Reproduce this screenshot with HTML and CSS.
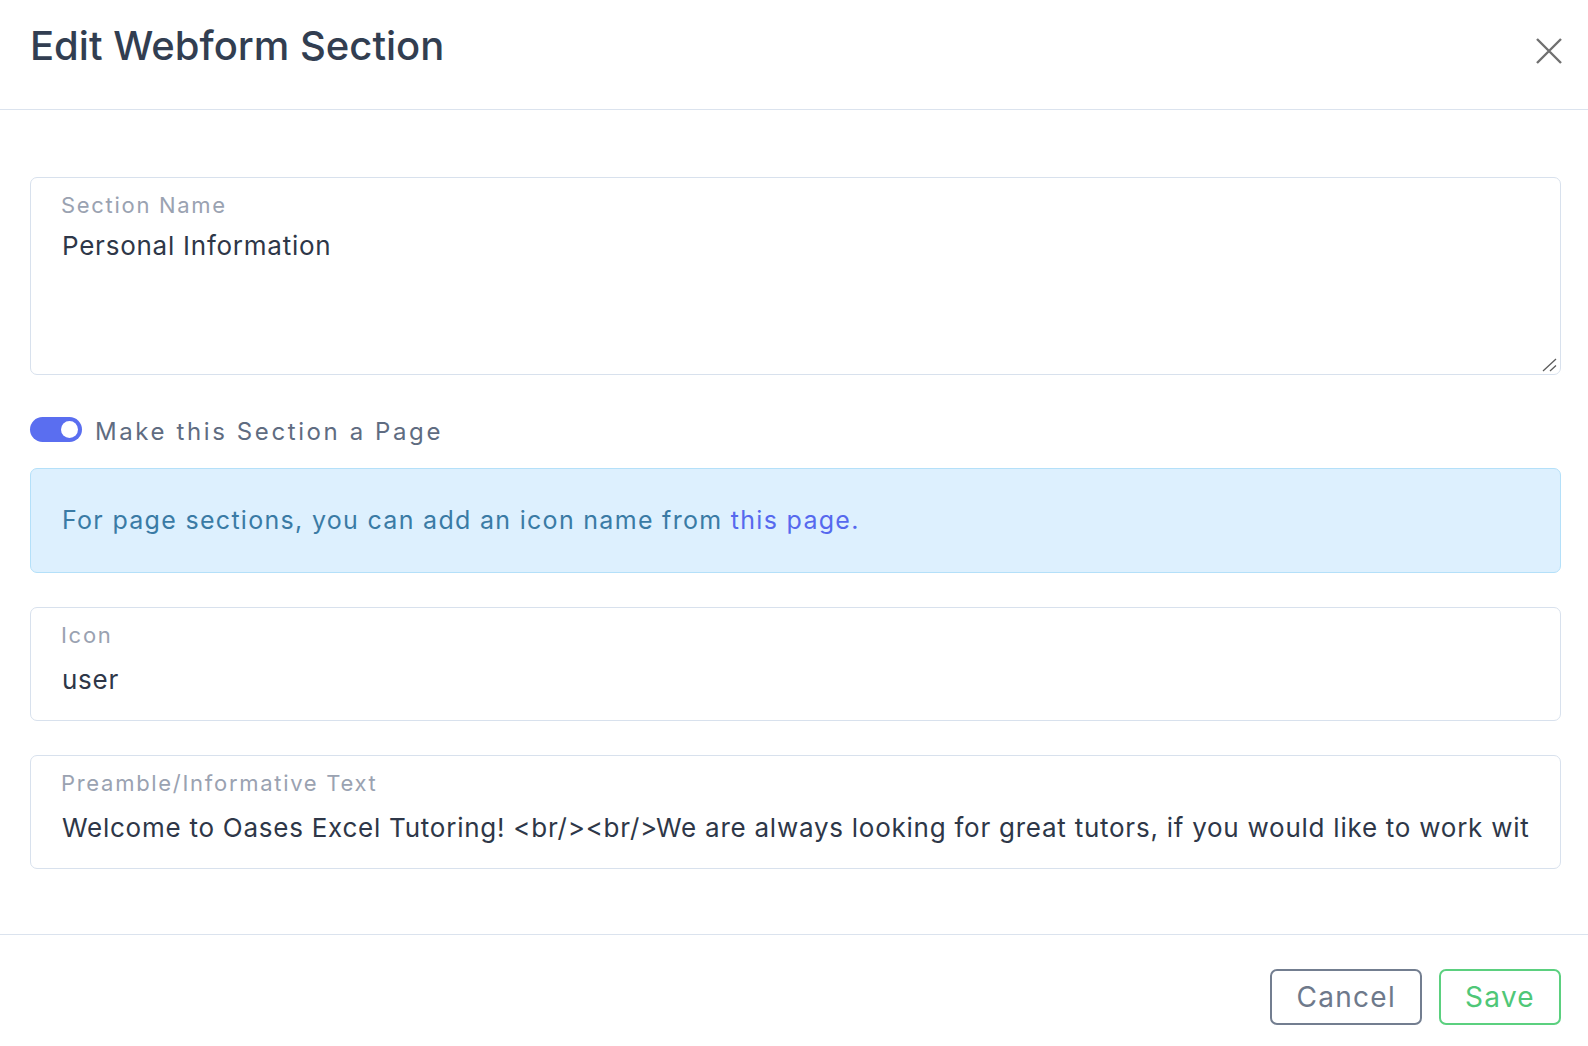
FILE: index.html
```html
<!DOCTYPE html>
<html>
<head>
  <title>Edit Webform Section</title>
  <link rel="stylesheet" href="styles.css">
</head>
<body>
  <div class="modal">
    <div class="modal-header">
      <h2 class="modal-title">Edit Webform Section</h2>
      <button type="button" class="btn-close" aria-label="Close">
        <svg width="26" height="26" viewBox="0 0 26 26">
          <path d="M1 1L25 25M25 1L1 25" stroke="#707070" stroke-width="2.4" fill="none"/>
        </svg>
      </button>
    </div>

    <form class="modal-body" id="sectionForm">
      <div class="field">
        <textarea id="sectionName" class="field-input field-textarea">Personal Information</textarea>
        <label for="sectionName" class="field-label">Section Name</label>
        <svg class="resize-grip" width="15" height="14" viewBox="0 0 15 14">
          <path d="M1 13L14 1M8 13L14 7.5" stroke="#5c5c5c" stroke-width="1.3" fill="none"/>
        </svg>
      </div>

      <div class="switch-row">
        <span class="switch"><span class="switch-knob"></span></span>
        <label class="switch-label">Make this Section a Page</label>
      </div>

      <div class="alert">
        For page sections, you can add an icon name from <a href="#" class="alert-link">this page.</a>
      </div>

      <div class="field">
        <input type="text" id="icon" class="field-input" value="user">
        <label for="icon" class="field-label">Icon</label>
      </div>

      <div class="field">
        <input type="text" id="preamble" class="field-input" value="Welcome to Oases Excel Tutoring! <br/><br/>We are always looking for great tutors, if you would like to work with us please fill out the form below.">
        <label for="preamble" class="field-label">Preamble/Informative Text</label>
      </div>
    </form>

    <div class="modal-footer">
      <button type="button" class="btn btn-cancel">Cancel</button>
      <button type="submit" form="sectionForm" class="btn btn-save">Save</button>
    </div>
  </div>
</body>
</html>
```

FILE: styles.css
```css
body {
  margin: 0;
  background: #fff;
  font-family: Inter, "Open Sans", sans-serif;
}

.modal {
  width: 100%;
}

.modal-header {
  display: flex;
  justify-content: space-between;
  align-items: flex-start;
  box-sizing: border-box;
  height: 110px;
  padding: 22px 26px 0 30px;
  border-bottom: 1px solid #dbe3ee;
}

.modal-title {
  margin: 0;
  font-size: 40px;
  font-weight: 500;
  line-height: 48px;
  color: #323e51;
}

.btn-close {
  margin-top: 16px;
  padding: 0;
  border: 0;
  background: none;
  width: 26px;
  height: 26px;
  cursor: pointer;
}

.btn-close svg {
  display: block;
}

.modal-body {
  display: flex;
  flex-direction: column;
  padding: 67px 27px 65px 30px;
}

.field {
  position: relative;
}

.field-input {
  display: block;
  box-sizing: border-box;
  width: 100%;
  height: 114px;
  margin: 0;
  padding: 52px 31px 21px;
  border: 1px solid #d8e1ed;
  border-radius: 7px;
  font-family: inherit;
  font-size: 26px;
  line-height: 1.5;
  letter-spacing: 0.75px;
  color: #2e3748;
  background: #fff;
  outline: none;
}

.field-textarea {
  height: 198px;
  padding-top: 48px;
  resize: none;
}

.field-label {
  position: absolute;
  top: 17px;
  left: 31px;
  font-size: 22px;
  line-height: 1;
  letter-spacing: 1.7px;
  color: #9aa2b1;
  pointer-events: none;
}

.resize-grip {
  position: absolute;
  right: 4px;
  bottom: 3px;
}

.switch-row {
  display: flex;
  align-items: center;
  gap: 13px;
  margin-top: 40px;
}

.switch {
  position: relative;
  width: 52px;
  height: 25px;
  border-radius: 13px;
  background: #5a6ef0;
  flex-shrink: 0;
}

.switch-knob {
  position: absolute;
  top: 4px;
  right: 4px;
  width: 17px;
  height: 17px;
  border-radius: 50%;
  background: #fff;
}

.switch-label {
  font-size: 24px;
  line-height: 25px;
  letter-spacing: 2.6px;
  color: #5f6c81;
  padding-top: 4px;
}

.alert {
  margin-top: 24px;
  padding: 33px 31px 32px;
  border: 1px solid #b4e0f9;
  border-radius: 7px;
  background: #ddf0fe;
  font-size: 25px;
  line-height: 1.5;
  letter-spacing: 1.3px;
  color: #3a7ba5;
}

.alert-link {
  color: #5669ee;
  text-decoration: none;
}

.alert + .field,
.field + .field {
  margin-top: 34px;
}

.modal-footer {
  display: flex;
  justify-content: flex-end;
  gap: 17px;
  padding: 34px 27px 0 30px;
  border-top: 1px solid #dbe3ee;
}

.btn {
  box-sizing: border-box;
  height: 56px;
  padding: 0 24px;
  border: 2px solid;
  border-radius: 7px;
  background: #fff;
  font-family: inherit;
  font-size: 28px;
  letter-spacing: 1.3px;
  cursor: pointer;
}

.btn-cancel {
  border-color: #737e90;
  color: #6e798b;
}

.btn-save {
  border-color: #5bd07f;
  color: #4fc777;
}
```
